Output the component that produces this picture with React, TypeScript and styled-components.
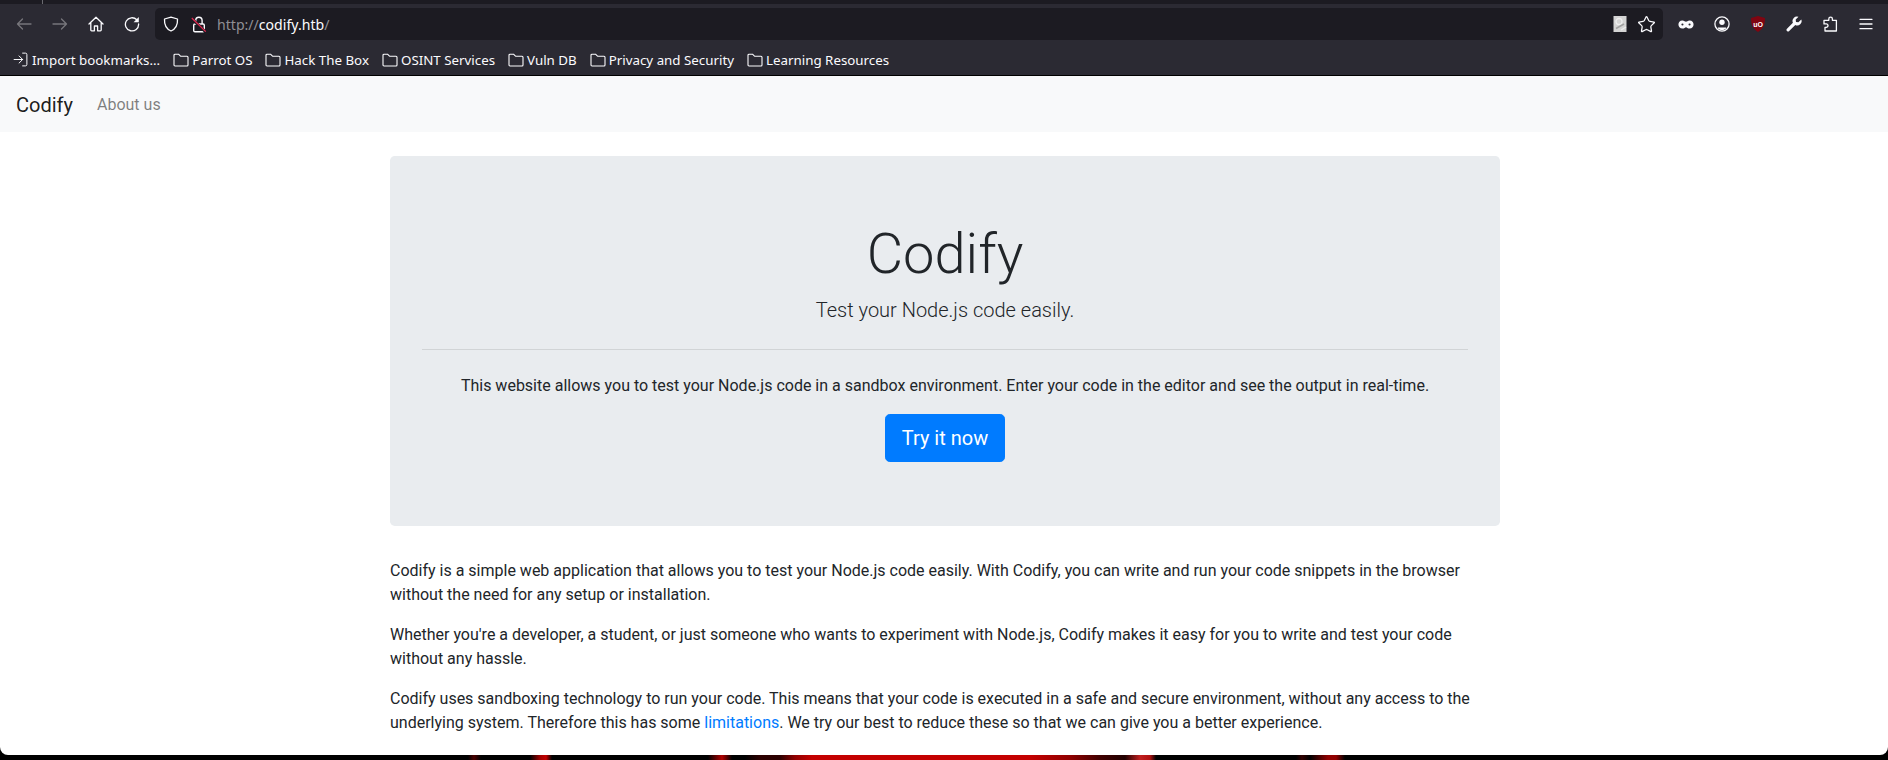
import React from "react";
import styled, { createGlobalStyle } from "styled-components";
import { Star, LogIn } from "lucide-react";

const Global = createGlobalStyle`
  html, body { margin: 0; padding: 0; width: 1888px; height: 760px; overflow: hidden; background: #000; }
  #root { width: 1888px; height: 760px; }
  * { box-sizing: border-box; }
`;

const Screen = styled.div`
  width: 1888px;
  height: 760px;
  display: flex;
  flex-direction: column;
  overflow: hidden;
  background: linear-gradient(90deg,
    #000 0, #000 468px, #4a0000 474px, #000 481px, #000 530px, #a00000 540px, #c40000 546px, #000 552px,
    #000 708px, #b00000 722px, #000 732px, #000 745px, #2c0000 760px, #2c0000 780px, #900000 795px, #c40000 812px,
    #c40000 1030px, #900000 1070px, #400000 1100px, #200000 1125px, #c02020 1140px, #b01010 1150px, #000 1156px,
    #000 1296px, #300000 1302px, #000 1310px, #900000 1328px, #900000 1336px, #000 1345px, #000 1888px);
`;
const TabStrip = styled.div`
  height: 4px;
  flex: none;
  background: #1c1b22;
  padding-left: 42px;
`;
const TabSeparator = styled.div`
  width: 1px;
  height: 4px;
  background: #6a6a70;
`;
const NavBar = styled.div`
  height: 36px;
  flex: none;
  padding-top: 4px;
  background: #2b2a33;
  display: flex;
  align-items: center;
`;
const NavButtons = styled.div`
  display: flex;
  align-items: center;
  flex: none;
  padding-left: 6px;
  margin-right: 5px;
`;
const IconSlot = styled.span<{ $dim?: boolean }>`
  width: 36px;
  height: 32px;
  flex: none;
  display: flex;
  align-items: center;
  justify-content: center;
  color: ${(p) => (p.$dim ? "#77767c" : "#fbfbfe")};
`;
const UrlBar = styled.div`
  width: 1508px;
  height: 32px;
  flex: none;
  background: #1c1b22;
  border-radius: 5px;
  display: flex;
  align-items: center;
  padding-left: 8px;
  color: #fbfbfe;
`;
const UrlIcons = styled.div`
  display: flex;
  align-items: center;
  gap: 12px;
  width: 54px;
  flex: none;
`;
const Url = styled.div`
  font: 14.1px "Noto Sans", sans-serif;
  color: #fbfbfe;
  flex: 1;
  & > span { color: #8f8f94; }
`;
const PageAction = styled.div`
  display: flex;
  align-items: center;
  gap: 10px;
  padding-right: 7px;
`;
const Toolbar = styled.div`
  display: flex;
  align-items: center;
  flex: none;
  padding-left: 5px;
`;
const Bookmarks = styled.div`
  height: 36px;
  flex: none;
  background: #2b2a33;
  border-bottom: 1px solid #000;
  display: flex;
  align-items: center;
  padding: 4px 0 0 12px;
  gap: 13px;
`;
const Bookmark = styled.div`
  display: flex;
  align-items: center;
  gap: 3px;
  font: 13.33px "Noto Sans", sans-serif;
  color: #fbfbfe;
  white-space: nowrap;
`;
const Page = styled.div`
  height: 679px;
  flex: none;
  background: #fff;
  border-radius: 0 0 8px 8px;
  overflow: hidden;
  font: 16px/24px Roboto, sans-serif;
  color: #212529;
`;
const SiteNav = styled.div`
  height: 56px;
  background: #f8f9fa;
  display: flex;
  align-items: center;
  padding: 1px 16px 0;
`;
const Brand = styled.div`
  font-size: 20px;
  line-height: 30px;
  margin-right: 16px;
  color: rgba(0, 0, 0, 0.9);
`;
const NavLink = styled.div`
  padding: 0 8px;
  color: rgba(0, 0, 0, 0.5);
`;
const Container = styled.div`
  width: 1110px;
  margin: 24px 0 0 390px;
`;
const Jumbo = styled.div`
  background: #e9ecef;
  border-radius: 4.8px;
  padding: 65px 32px 64px;
  height: 370px;
  text-align: center;
`;
const Title = styled.h1`
  margin: 0 0 7px;
  font-size: 56px;
  font-weight: 300;
  line-height: 67px;
`;
const Lead = styled.p`
  margin: 0;
  font-size: 20px;
  font-weight: 300;
  line-height: 30px;
`;
const Rule = styled.hr`
  margin: 24px 0;
  border: 0;
  border-top: 1px solid rgba(0, 0, 0, 0.1);
`;
const JumboText = styled.p`
  margin: 0 0 16px;
`;
const Cta = styled.div`
  display: inline-block;
  background: #007bff;
  color: #fff;
  font-size: 20px;
  line-height: 30px;
  padding: 8px 16px;
  border: 1px solid #007bff;
  border-radius: 4.8px;
`;
const Body = styled.div`
  margin-top: 33px;
`;
const Para = styled.p`
  margin: 0 0 16px;
`;
const Anchor = styled.a`
  color: #007bff;
`;

const Icon = ({ children, size = 16 }: { children: React.ReactNode; size?: number }) => (
  <svg width={size} height={size} viewBox="0 0 16 16" fill="none" stroke="currentColor" strokeWidth="1.3" strokeLinejoin="round" strokeLinecap="round">
    {children}
  </svg>
);
const Back = () => <Icon><path d="M15 8H1.5M6.5 3 1.5 8l5 5" /></Icon>;
const Forward = () => <Icon><path d="M1 8h13.5M9.5 3l5 5-5 5" /></Icon>;
const Home = () => <Icon><path d="M1 8 8 1.2 15 8M2.8 6.5V14a.8.8 0 0 0 .8.8H6.4V10h3.2v4.8h2.8a.8.8 0 0 0 .8-.8V6.5" /></Icon>;
const Reload = () => (
  <Icon>
    <path d="M12.8 3.8A6.6 6.6 0 1 0 14.6 8" />
    <path d="M14.8 1v5.2H9.6z" fill="currentColor" stroke="none" />
  </Icon>
);
const ShieldIcon = () => <Icon><path d="M8 1.1 14.5 3c.3 5.2-1.3 9.7-6.5 12C2.8 12.7 1.2 8.2 1.5 3z" /></Icon>;
const InsecureLock = () => (
  <svg width="16" height="17" viewBox="0 0 16 17" fill="none">
    <path d="M4.7 8V4.5a3.2 3.2 0 0 1 6.4 0V8" stroke="#fbfbfe" strokeWidth="1.4" />
    <rect x="2.7" y="8" width="10.6" height="7.8" rx="1.2" stroke="#fbfbfe" strokeWidth="1.4" />
    <path d="M0.8 2.6 14.8 16.2" stroke="#1c1b22" strokeWidth="2.8" />
    <path d="M0.8 2 14.8 15.6" stroke="#e22850" strokeWidth="1.3" />
  </svg>
);
const PageIcon = () => (
  <svg width="14" height="16" viewBox="0 0 14 16">
    <rect x="0.5" width="13" height="16" fill="#d4d4d4" />
    <circle cx="6" cy="5.5" r="3" fill="none" stroke="#eeeeee" strokeWidth="1.3" />
    <path d="M3 12.5 11 8" stroke="#a0a0a0" strokeWidth="1.5" />
    <path d="M8 14 13 11" stroke="#eeeeee" strokeWidth="1.3" />
  </svg>
);
const Mask = () => (
  <svg width="16" height="9" viewBox="0 0 18 10">
    <path fillRule="evenodd" fill="#fbfbfe" d="M5 .5C7 .5 8 2 9 2s2-1.5 4-1.5c3 0 4.5 2 4.5 4.5S16 9.5 13 9.500C11 9.500 10 8 9 8S7 9.500 5 9.500C2 9.500.5 7.500.5 5S2 .5 5 .5ZM5 3.800a1.200 1.200 0 1 0 0 2.400 1.200 1.200 0 1 0 0-2.400ZM13 3.800a1.200 1.200 0 1 0 0 2.400 1.200 1.200 0 1 0 0-2.400Z" />
  </svg>
);
const Account = () => (
  <Icon>
    <circle cx="8" cy="8" r="7.1" />
    <circle cx="8" cy="6.3" r="2.7" fill="currentColor" stroke="none" />
    <path d="M3.800 11.400h8.400v1.200a7 7 0 0 1-8.400 0z" fill="currentColor" stroke="none" />
  </Icon>
);
const UblockBadge = () => (
  <svg width="14" height="16" viewBox="0 0 14 16">
    <path d="M7 0 14 2C14 9 12 13 7 16 2 13 0 9 0 2Z" fill="#800511" />
    <text x="7" y="10.5" fontSize="7" fontWeight="700" textAnchor="middle" fill="#fff" fontFamily="Liberation Sans, sans-serif">uO</text>
  </svg>
);
const WrenchIcon = () => (
  <svg width="16" height="16" viewBox="0 0 16 16">
    <path fill="#fbfbfe" d="M15.300 3.500 12.400 6.300 10 6 9.700 3.600 12.500.8A4.400 4.400 0 0 0 6.900 6.700L1 12.800A1.500 1.500 0 0 0 3.200 15L9.300 9.100A4.400 4.400 0 0 0 15.300 3.500Z" />
  </svg>
);
const PuzzleIcon = () => (
  <Icon><path d="M6.800 4.300V3a1.800 1.800 0 0 1 3.600 0v1.300h4V15H3V11.300H4.300a1.700 1.700 0 0 0 0-3.400H2V4.300z" /></Icon>
);
const Hamburger = () => <Icon><path d="M2 3.300h12M2 8h12M2 12.700h12" /></Icon>;
const FolderIcon = () => (
  <svg width="16" height="16" viewBox="0 0 16 16" fill="none" stroke="#fbfbfe" strokeWidth="1.1" strokeLinejoin="round">
    <path d="M1 3.200A1 1 0 0 1 2 2.200H5.500L7.500 4.200H14A1 1 0 0 1 15 5.200V13A1 1 0 0 1 14 14H2A1 1 0 0 1 1 13Z" />
  </svg>
);

const folders = ["Parrot OS", "Hack The Box", "OSINT Services", "Vuln DB", "Privacy and Security", "Learning Resources"];

export default function App() {
  return (
    <Screen>
      <Global />
      <TabStrip><TabSeparator /></TabStrip>
      <NavBar>
        <NavButtons>
          <IconSlot $dim><Back /></IconSlot>
          <IconSlot $dim><Forward /></IconSlot>
          <IconSlot><Home /></IconSlot>
          <IconSlot><Reload /></IconSlot>
        </NavButtons>
        <UrlBar>
          <UrlIcons>
            <ShieldIcon />
            <InsecureLock />
          </UrlIcons>
          <Url><span>http://</span>codify.htb<span>/</span></Url>
          <PageAction>
            <PageIcon />
            <Star size={19} strokeWidth={1.6} />
          </PageAction>
        </UrlBar>
        <Toolbar>
          <IconSlot><Mask /></IconSlot>
          <IconSlot><Account /></IconSlot>
          <IconSlot><UblockBadge /></IconSlot>
          <IconSlot><WrenchIcon /></IconSlot>
          <IconSlot><PuzzleIcon /></IconSlot>
          <IconSlot><Hamburger /></IconSlot>
        </Toolbar>
      </NavBar>
      <Bookmarks>
        <Bookmark><LogIn size={17} strokeWidth={1.4} />Import bookmarks...</Bookmark>
        {folders.map((f) => (
          <Bookmark key={f}><FolderIcon />{f}</Bookmark>
        ))}
      </Bookmarks>
      <Page>
        <SiteNav>
          <Brand>Codify</Brand>
          <NavLink>About us</NavLink>
        </SiteNav>
        <Container>
          <Jumbo>
            <Title>Codify</Title>
            <Lead>Test your Node.js code easily.</Lead>
            <Rule />
            <JumboText>This website allows you to test your Node.js code in a sandbox environment. Enter your code in the editor and see the output in real-time.</JumboText>
            <Cta>Try it now</Cta>
          </Jumbo>
          <Body>
            <Para>Codify is a simple web application that allows you to test your Node.js code easily. With Codify, you can write and run your code snippets in the browser without the need for any setup or installation.</Para>
            <Para>Whether you're a developer, a student, or just someone who wants to experiment with Node.js, Codify makes it easy for you to write and test your code without any hassle.</Para>
            <Para>Codify uses sandboxing technology to run your code. This means that your code is executed in a safe and secure environment, without any access to the underlying system. Therefore this has some <Anchor>limitations</Anchor>. We try our best to reduce these so that we can give you a better experience.</Para>
          </Body>
        </Container>
      </Page>
    </Screen>
  );
}
